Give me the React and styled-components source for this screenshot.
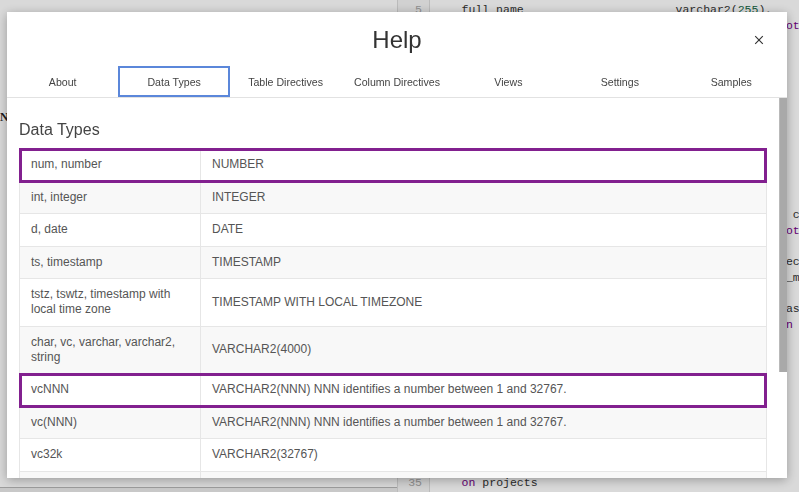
import React from 'react'
import styled, { createGlobalStyle } from 'styled-components'

const GlobalStyle = createGlobalStyle`
  html, body {
    margin: 0;
    padding: 0;
    height: 100%;
    overflow: hidden;
  }
  body {
    font-family: "Liberation Sans", Arial, sans-serif;
    background: #fff;
  }
`

const tabs = ['About', 'Data Types', 'Table Directives', 'Column Directives', 'Views', 'Settings', 'Samples']

const types = [
  ['num, number', 'NUMBER', true],
  ['int, integer', 'INTEGER'],
  ['d, date', 'DATE'],
  ['ts, timestamp', 'TIMESTAMP'],
  ['tstz, tswtz, timestamp with local time zone', 'TIMESTAMP WITH LOCAL TIMEZONE'],
  ['char, vc, varchar, varchar2, string', 'VARCHAR2(4000)'],
  ['vcNNN', 'VARCHAR2(NNN) NNN identifies a number between 1 and 32767.', true],
  ['vc(NNN)', 'VARCHAR2(NNN) NNN identifies a number between 1 and 32767.'],
  ['vc32k', 'VARCHAR2(32767)'],
  ['clob', 'CLOB'],
  ['blob', 'BLOB'],
  ['json', 'CLOB CHECK (<Column_Name> IS JSON)'],
  ['bool, boolean', "VARCHAR2(1) CHECK (<Column_Name> IN ('Y','N'))"],
]

// generated sql behind the dialog, [column, text, kind]
// only the bits that peek out past the dialog are kept
const sql = [
  [[4, 'full_name'], [35, 'varchar2('], [44, '255', 'num'], [47, '),']],
  [[50, 'not null', 'kw']],
  [], [], [], [], [], [], [], [], [], [], [],
  [[52, 'c']],
  [[50, 'not null', 'kw']],
  [],
  [[51, 'ec']],
  [[51, '_m']],
  [],
  [[51, 'as']],
  [[51, 'n', 'kw']],
  [], [], [], [], [], [], [], [], [],
  [[4, 'on', 'kw'], [7, 'projects']],
  [],
]

const gutterNumbers = { 0: 5, 30: 35 }

function renderLine(parts) {
  let col = 0
  return parts.map(([at, text, kind], i) => {
    const pad = ' '.repeat(Math.max(0, at - col))
    col = Math.max(col, at) + text.length
    return (
      <React.Fragment key={i}>
        {pad}
        <Token $kind={kind}>{text}</Token>
      </React.Fragment>
    )
  })
}

function CloseIcon() {
  return (
    <svg width="10" height="10" viewBox="0 0 10 10">
      <path d="M1.2 1.2 L8.8 8.8 M8.8 1.2 L1.2 8.8" stroke="#333" strokeWidth="1.15" fill="none" />
    </svg>
  )
}

export default function App() {
  return (
    <>
      <GlobalStyle />
      <Screen>
        <LeftPane>
          <Lines>
            {Array.from({ length: 7 }).map((_, i) => (
              <Line key={i}> </Line>
            ))}
            <Line>N</Line>
          </Lines>
          <Footer />
        </LeftPane>
        <Gutter>
          {sql.map((_, i) => (
            <Num key={i}>{gutterNumbers[i] ?? ' '}</Num>
          ))}
        </Gutter>
        <Code>
          {sql.map((parts, i) => (
            <Line key={i}>{parts.length ? renderLine(parts) : ' '}</Line>
          ))}
        </Code>
      </Screen>

      <Backdrop>
        <Dialog>
          <Header>
            <span />
            <Title>Help</Title>
            <Close>
              <CloseIcon />
            </Close>
          </Header>
          <TabBar>
            {tabs.map((t) => (
              <Tab key={t} $active={t === 'Data Types'}>
                {t}
              </Tab>
            ))}
          </TabBar>
          <Body>
            <Scroller>
              <Heading>Data Types</Heading>
              <Table>
                {types.map(([name, type, marked], i) => (
                  <Row key={name} $striped={i % 2 === 1} $marked={marked}>
                    <Cell>{name}</Cell>
                    <Cell $divider>{type}</Cell>
                  </Row>
                ))}
              </Table>
            </Scroller>
            <ScrollTrack>
              <Thumb $size={274} />
            </ScrollTrack>
          </Body>
        </Dialog>
      </Backdrop>
    </>
  )
}

const Screen = styled.div`
  display: grid;
  grid-template-columns: 397px 33px 1fr;
  height: 100vh;
  background: #fff;
  font-family: "Liberation Mono", "DejaVu Sans Mono", monospace;
  font-size: 11.5px;
`

const LeftPane = styled.div`
  display: flex;
  flex-direction: column;
  overflow: hidden;
`

const Lines = styled.div`
  flex: 1;
  padding-top: 0;
  color: #222;
  font-weight: bold;
  font-family: "Liberation Serif", serif;
`

const Footer = styled.div`
  height: 4px;
  border-top: 1px solid #b8b8b8;
  background: #ececec;
`

const Gutter = styled.div`
  padding-top: 2px;
  background: #f6f6f6;
  border-left: 1px solid #dcdcdc;
  border-right: 1px solid #dcdcdc;
  overflow: hidden;
`

const Num = styled.div`
  height: 15.75px;
  line-height: 15.75px;
  padding-right: 7px;
  text-align: right;
  color: #aaa;
  white-space: pre;
`

const Code = styled.div`
  padding: 2px 0 0 4px;
  overflow: hidden;
  color: #333;
`

const Line = styled.div`
  height: 15.75px;
  line-height: 15.75px;
  white-space: pre;
`

const Token = styled.span`
  color: ${(p) => (p.$kind === 'kw' ? '#770088' : p.$kind === 'num' ? '#116644' : 'inherit')};
`

const Backdrop = styled.div`
  position: fixed;
  inset: 0;
  padding: 12px 0 0 7px;
  background: rgba(0, 0, 0, 0.15);
`

const Dialog = styled.div`
  width: 780px;
  height: 466px;
  display: flex;
  flex-direction: column;
  background: #fff;
  box-shadow: 0 2px 10px rgba(0, 0, 0, 0.3);
  font-family: "Liberation Sans", Arial, sans-serif;
`

const Header = styled.div`
  height: 54px;
  flex: none;
  display: grid;
  grid-template-columns: 1fr auto 1fr;
  align-items: center;
  padding-top: 2px;
  box-sizing: border-box;
`

const Title = styled.h2`
  margin: 0;
  font-size: 24px;
  font-weight: normal;
  color: #333;
`

const Close = styled.button`
  justify-self: end;
  margin-right: 23px;
  padding: 0;
  border: 0;
  background: none;
  display: flex;
  cursor: pointer;
`

const TabBar = styled.div`
  height: 32px;
  flex: none;
  display: flex;
  box-sizing: border-box;
  border-bottom: 1px solid #e2e2e2;
`

const Tab = styled.div`
  flex: 1;
  display: flex;
  align-items: center;
  justify-content: center;
  box-sizing: border-box;
  border: 2px solid ${(p) => (p.$active ? '#5b87da' : 'transparent')};
  font-size: 10.6px;
  color: #444;
  cursor: pointer;
`

const Body = styled.div`
  flex: 1;
  min-height: 0;
  display: flex;
`

const Scroller = styled.div`
  flex: 1;
  min-width: 0;
  overflow: hidden;
  padding: 22px 12px 0;
`

const ScrollTrack = styled.div`
  width: 8px;
  flex: none;
  background: #fff;
`

const Thumb = styled.div`
  height: ${(p) => p.$size}px;
  background: #a9a9a9;
  border-left: 1px solid #b9b9b9;
  box-sizing: border-box;
`

const Heading = styled.h3`
  margin: 0 0 8px;
  font-size: 16px;
  line-height: 20px;
  font-weight: normal;
  color: #444;
`

const Table = styled.div`
  border: 1px solid #e6e6e6;
  border-bottom: 0;
`

const Row = styled.div`
  position: relative;
  display: grid;
  grid-template-columns: 180px 1fr;
  border-bottom: 1px solid #e6e6e6;
  background: ${(p) => (p.$striped ? '#f8f8f8' : '#fff')};
  outline: ${(p) => (p.$marked ? '3px solid #82208f' : 'none')};
  outline-offset: -2px;
  z-index: ${(p) => (p.$marked ? 1 : 0)};
`

const Cell = styled.div`
  display: flex;
  align-items: center;
  padding: 8.25px 11px;
  line-height: 15px;
  font-size: 12px;
  color: #555;
  border-left: ${(p) => (p.$divider ? '1px solid #e6e6e6' : '0')};
`
